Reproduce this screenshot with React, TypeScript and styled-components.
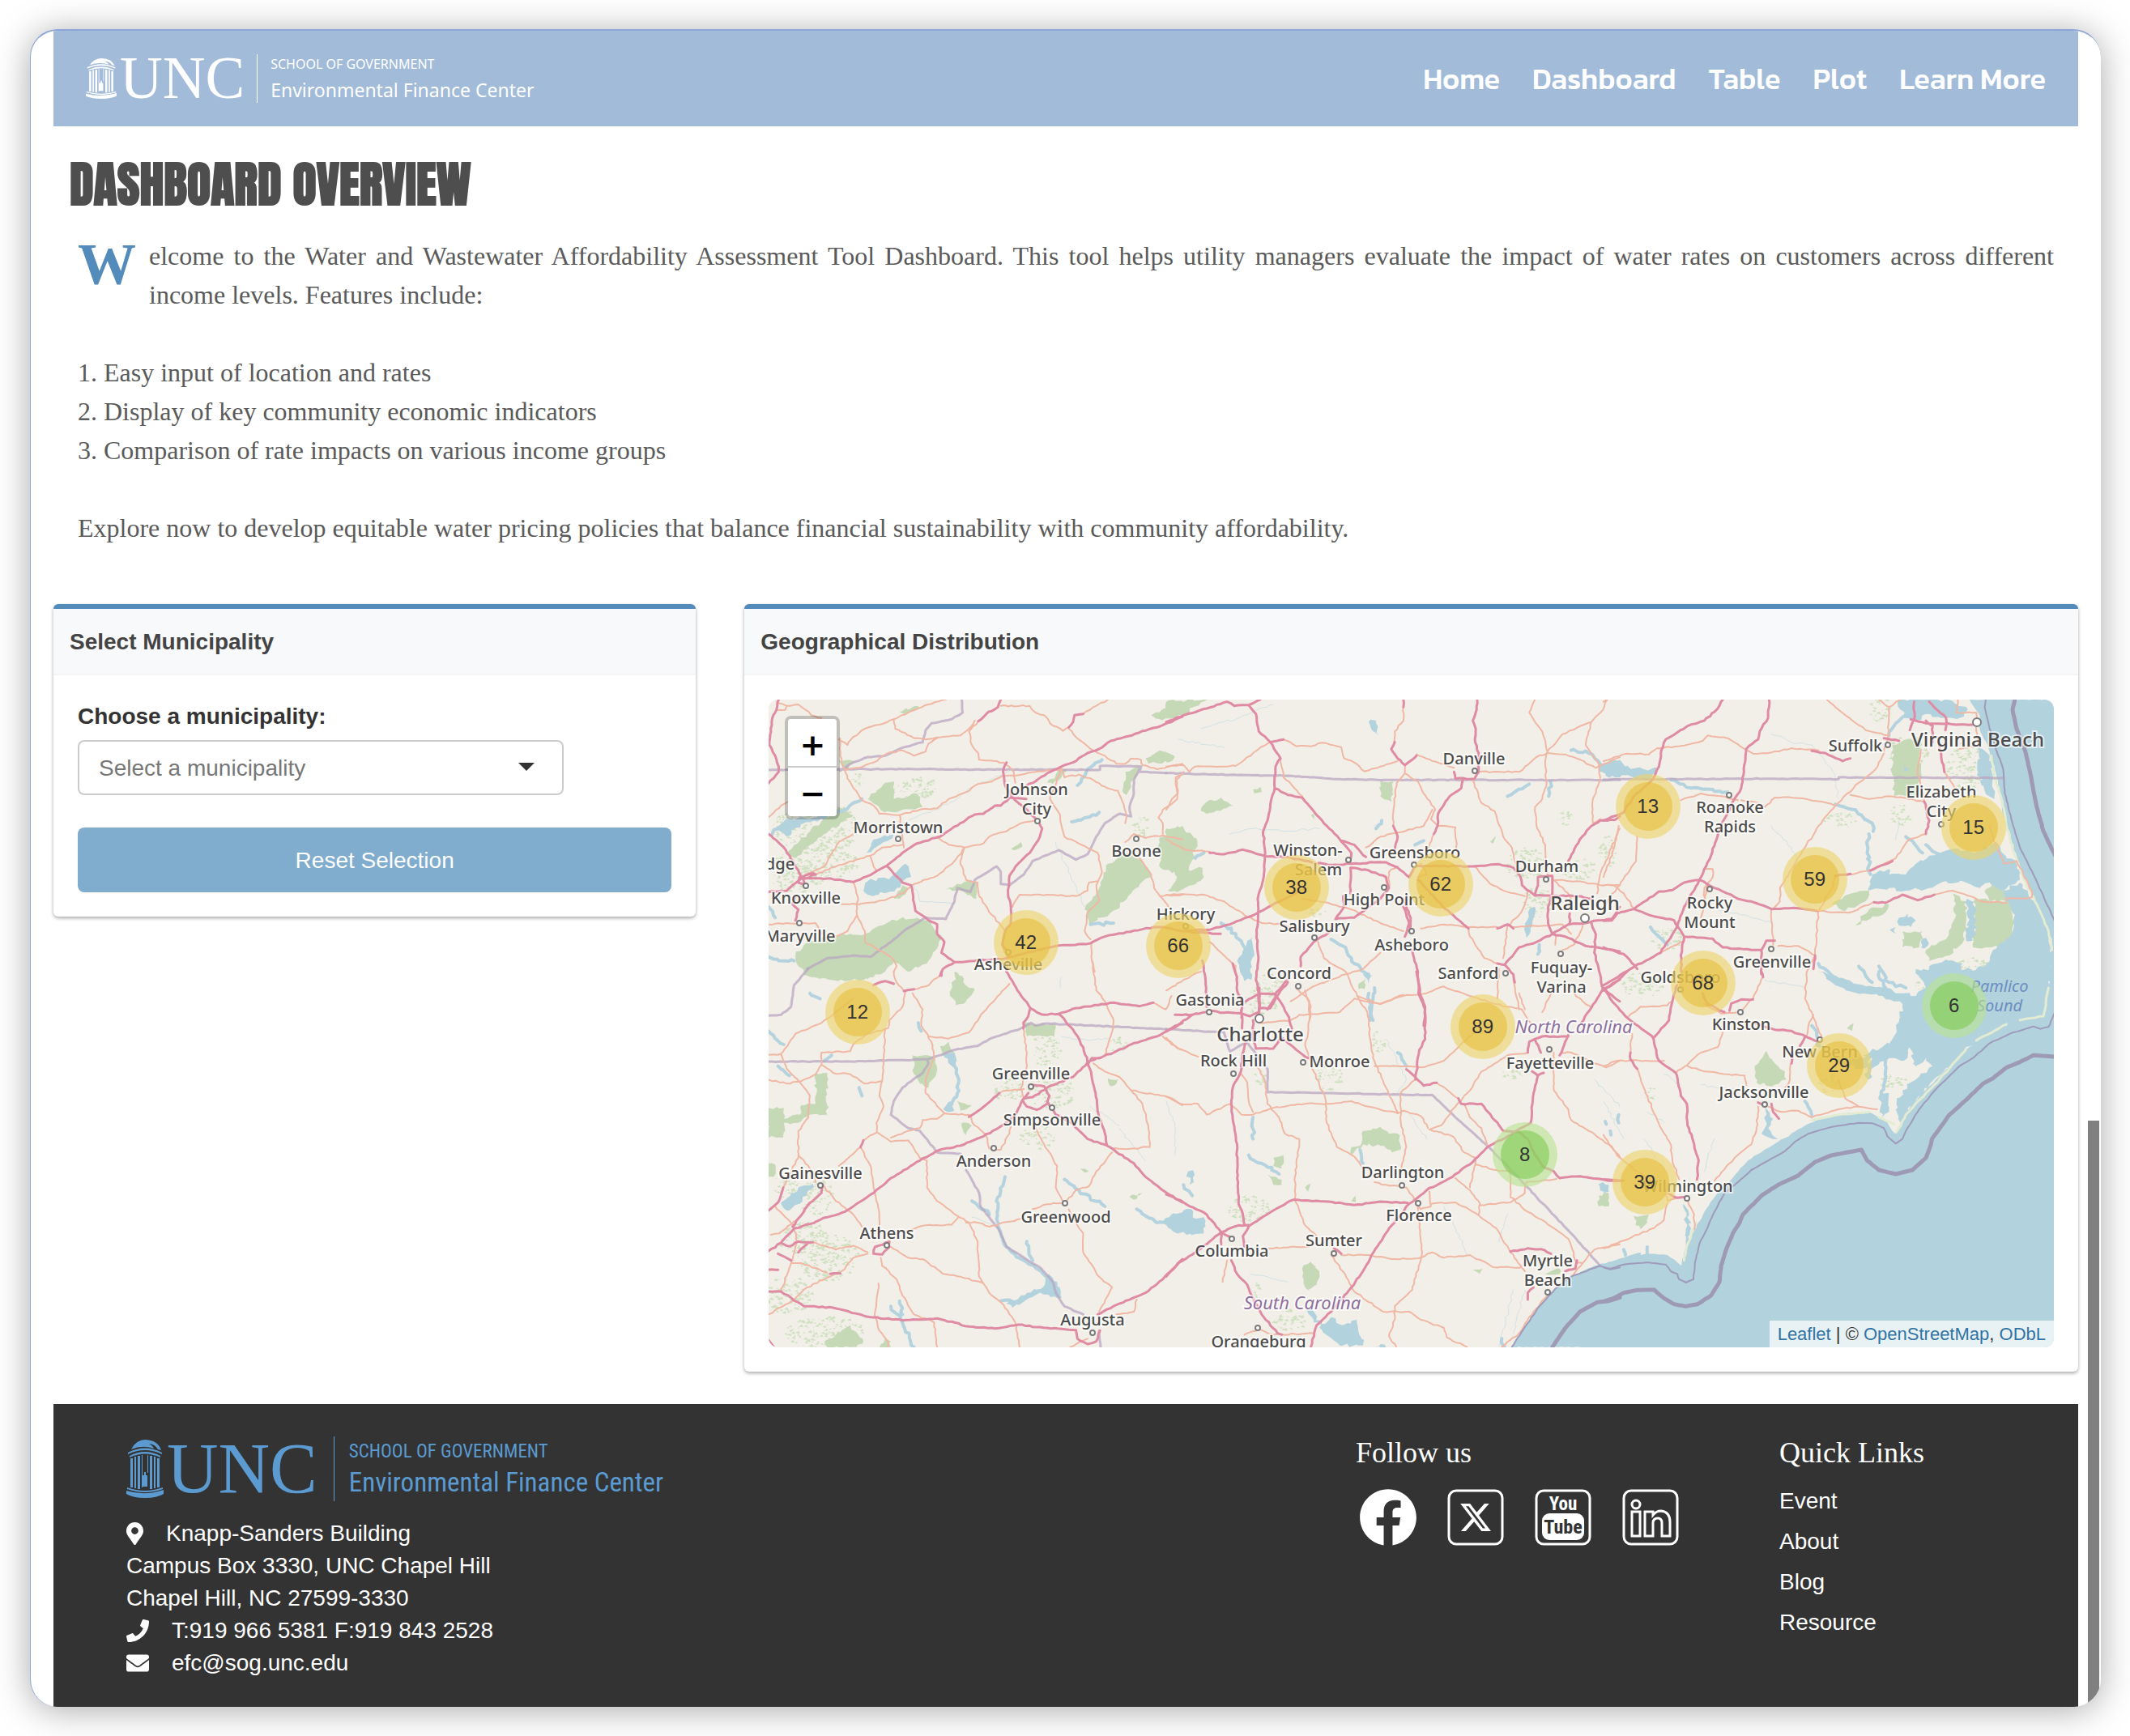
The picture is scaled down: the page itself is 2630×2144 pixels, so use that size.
import React from "react";
import styled, { createGlobalStyle } from "styled-components";
import { FaEnvelope, FaFacebook, FaMapMarkerAlt, FaPhone } from "react-icons/fa";
import { FaXTwitter } from "react-icons/fa6";

const sans = `"Helvetica Neue", "Liberation Sans", Arial, sans-serif`;
const serif = `"Liberation Serif", "Times New Roman", serif`;
const humanist = `"Noto Sans", "Open Sans", sans-serif`;
const condensed = `"Roboto Condensed", "Noto Sans", sans-serif`;
const accent = "#538bba";

const GlobalStyle = createGlobalStyle`
  *, *::before, *::after { box-sizing: border-box; }
  body { margin: 0; background: #fff; font-family: ${sans}; font-size: 28px; line-height: 40px; color: #333; }
  h1, h2, p, ul, ol { margin: 0; padding: 0; }
  ul, ol { list-style: none; }
  a { text-decoration: none; }
  button, select { font: inherit; }
`;

/* ---------- window ---------- */

const Window = styled.div`
  position: relative;
  margin: 36px 36px 36px 37px;
  padding: 0 28px;
  border-top: 2px solid #8da7d8;
  border-left: 1px solid #8da7d8;
  border-radius: 34px;
  background: #fff;
  box-shadow: 0 4px 44px rgba(0, 0, 0, 0.34);
  overflow: hidden;
`;

const ScrollThumb = styled.div`
  position: absolute;
  top: 65%;
  right: 2px;
  bottom: 0;
  width: 14px;
  background: #808080;
`;

/* ---------- logo ---------- */

const LogoLink = styled.a<{ $tone: string }>`
  display: flex;
  align-items: center;
  color: ${(p) => p.$tone};
`;

const Rotunda = styled.svg<{ $w: number; $h: number }>`
  width: ${(p) => p.$w}px;
  height: ${(p) => p.$h}px;
`;

const Monogram = styled.span<{ $size: number }>`
  padding-left: 4px;
  font: ${(p) => p.$size}px/60px ${serif};
`;

const LogoText = styled.span<{ $large?: boolean }>`
  display: flex;
  flex-direction: column;
  justify-content: center;
  gap: ${(p) => (p.$large ? 10 : 4)}px;
  height: ${(p) => (p.$large ? 80 : 60)}px;
  margin-left: ${(p) => (p.$large ? 20 : 15)}px;
  padding-left: ${(p) => (p.$large ? 18 : 16)}px;
  border-left: 1px solid currentColor;
  font-family: ${(p) => (p.$large ? condensed : humanist)};
`;

const School = styled.span<{ $large?: boolean }>`
  font-size: ${(p) => (p.$large ? 23 : 16)}px;
  line-height: 24px;
`;

const Center = styled.span<{ $large?: boolean }>`
  font-size: ${(p) => (p.$large ? 33 : 23)}px;
  line-height: 32px;
`;

function Logo({ tone, large }: { tone: string; large?: boolean }) {
  return (
    <LogoLink href="#home" $tone={tone}>
      <Rotunda $w={large ? 46 : 38} $h={large ? 72 : 50} viewBox="0 0 46 72" preserveAspectRatio="none" aria-hidden="true">
        <g fill="currentColor">
          <path d="M6 12 Q12 0 24 0 Q39 1 43 13 L39 12 Q36 6 28 5 Q33 8 34 11 Q20 6 6 12Z" />
          <path d="M2 16 Q23 5 44 16 L44 18 Q23 8 2 18Z" />
          <path d="M4 20 Q23 10 42 20 L42 22 Q23 13 4 22Z" />
          <path d="M5 23h3v36h-3zM10 21h2v39h-2zM14 20h3v41h-3zM29 20h3v41h-3zM34 21h2v39h-2zM38 23h3v36h-3z" />
          <path d="M20 44h6v14h-6zM22 40h2v4h-2zM19 19h1v40h-1zM26 19h1v22h-1z" />
          <path d="M1 59 Q23 67 45 59 L45 61 Q23 69 1 61Z" />
          <path d="M0 63 Q23 70 46 62 L46 67 Q38 72 23 72 Q8 72 0 67Z" />
        </g>
      </Rotunda>
      <Monogram $size={large ? 88 : 73}>UNC</Monogram>
      <LogoText $large={large}>
        <School $large={large}>SCHOOL OF GOVERNMENT</School>
        <Center $large={large}>Environmental Finance Center</Center>
      </LogoText>
    </LogoLink>
  );
}

/* ---------- header ---------- */

const Header = styled.header`
  display: flex;
  align-items: center;
  justify-content: space-between;
  height: 118px;
  padding: 0 40px;
  background: #a1bbd9;
`;

const Nav = styled.nav`
  display: flex;
  gap: 40px;
`;

const NavLink = styled.a`
  color: #fff;
  font: 500 36px/48px Kanit, ${humanist};
`;

/* ---------- intro ---------- */

const Title = styled.h1`
  padding: 32px 20px 24px;
  color: #4e4e4e;
  font: 700 60px/80px Anton, "Open Sans Condensed", "Roboto Condensed", sans-serif;
  text-transform: uppercase;
`;

const Intro = styled.section`
  padding: 0 30px 70px;
  color: #5a5a5a;
  font: 32px/48px ${serif};
  text-align: justify;
`;

const DropCap = styled.span`
  float: left;
  padding: 4px 16px 0 0;
  color: ${accent};
  font-weight: 700;
  font-size: 72px;
  line-height: 60px;
`;

const FeatureList = styled.ol`
  clear: both;
  padding: 48px 0;
`;

/* ---------- cards ---------- */

const Columns = styled.main`
  display: grid;
  grid-template-columns: calc((100% - 120px) / 3) 1fr;
  gap: 60px;
  align-items: start;
  padding-bottom: 40px;
`;

const Card = styled.section`
  border-top: 6px solid ${accent};
  border-radius: 6px;
  background: #fff;
  box-shadow: 0 2px 4px rgba(0, 0, 0, 0.34);
`;

const CardTitle = styled.h2`
  padding: 21px 20px 19px;
  border-bottom: 2px solid #f4f4f4;
  background: #f8f9fb;
  color: #444;
  font-size: 28px;
  line-height: 40px;
`;

const CardBody = styled.div`
  padding: 30px;
`;

const Label = styled.label`
  display: block;
  padding: 1px 0 9px;
  font-weight: 700;
`;

const SelectBox = styled.div`
  position: relative;
  max-width: 600px;
  margin-bottom: 40px;
`;

const Select = styled.select`
  display: block;
  width: 100%;
  height: 68px;
  padding: 2px 24px 0;
  border: 2px solid #ccc;
  border-radius: 8px;
  appearance: none;
  background: #fff;
  color: #777;
`;

const Caret = styled.svg`
  position: absolute;
  top: 28px;
  right: 36px;
  width: 20px;
  height: 10px;
  pointer-events: none;
`;

const ResetButton = styled.button`
  display: block;
  width: 100%;
  height: 80px;
  padding: 2px 0 0;
  border: 0;
  border-radius: 8px;
  background: #80acce;
  color: #fff;
`;

/* ---------- map ---------- */

const MapFrame = styled.div`
  position: relative;
  height: 800px;
  border-radius: 12px;
  background: #f2efe9;
  overflow: hidden;
`;

const World = styled.div`
  position: absolute;
  top: 0;
  left: calc(50% - 794px);
  width: 1587px;
  height: 800px;
`;

const Drawing = styled.svg`
  display: block;
  width: 100%;
  height: 100%;
`;

const PlaceName = styled.text<{ $kind?: string }>`
  fill: ${(p) => (p.$kind === "state" ? "#8d6f9f" : p.$kind === "water" ? "#6c8dc0" : "#4c4c4c")};
  stroke: rgba(255, 255, 255, 0.65);
  stroke-width: ${(p) => (p.$kind === "water" ? 0 : 4)}px;
  paint-order: stroke;
  font-family: ${humanist};
  font-size: ${(p) => (p.$kind === "city" ? 24 : p.$kind === "state" ? 22 : 20)}px;
  font-style: ${(p) => (p.$kind === "state" || p.$kind === "water" ? "italic" : "normal")};
  font-weight: ${(p) => (p.$kind === "state" || p.$kind === "water" ? 400 : 500)};
  text-anchor: middle;
`;

const Cluster = styled.button<{ $x: number; $y: number; $small: boolean }>`
  position: absolute;
  left: ${(p) => p.$x}px;
  top: ${(p) => p.$y}px;
  width: 80px;
  height: 80px;
  margin: -40px 0 0 -40px;
  padding: 0;
  border: 10px solid transparent;
  border-radius: 50%;
  background: ${(p) => (p.$small ? "rgba(120, 200, 75, 0.55)" : "rgba(230, 190, 60, 0.6)")} padding-box;
  color: #333;
  font-size: 24px;
  line-height: 60px;

  &::before {
    content: "";
    position: absolute;
    inset: -10px;
    z-index: -1;
    border-radius: 50%;
    background: ${(p) => (p.$small ? "rgba(185, 226, 145, 0.62)" : "rgba(238, 212, 105, 0.62)")};
  }
`;

const ClusterLayer = styled.div`
  position: absolute;
  inset: 0;
  z-index: 0;
`;

const ZoomBar = styled.div`
  position: absolute;
  top: 20px;
  left: 20px;
  width: 68px;
  border: 4px solid rgba(0, 0, 0, 0.2);
  border-radius: 8px;
  background: #fff padding-box;
  overflow: hidden;
`;

const ZoomButton = styled.button`
  display: block;
  width: 60px;
  height: 60px;
  padding: 4px 0 0;
  border: 0;
  background: #fff;
  color: #000;
  font: 700 38px/56px "DejaVu Sans", sans-serif;

  &:first-child { border-bottom: 2px solid #ccc; }
`;

const Attribution = styled.div`
  position: absolute;
  right: 0;
  bottom: 0;
  padding: 0 10px;
  background: rgba(255, 255, 255, 0.7);
  font-size: 22px;
  line-height: 33px;

  a { color: #3173a5; }
`;

type Layer = "wood" | "speckle" | "water" | "river" | "creek" | "border" | "trunk" | "motorway" | "limit" | "coastal" | "sand";
type Sheet = { x: number; y: number; sx: number; sy: number } & Partial<Record<Layer, string>>;

/* Survey sheets: each has its own origin and scale; lines are separated by "/" */
const sheets: Sheet[] = [
  {
    x: 900, y: 720, sx: 2.8, sy: 3,
    motorway:
      "172,432 160,480 150,500 145,540 140,600 160,640 172,680 172,700 137,742/1568,495 1530,515 1480,535 1430,548 1380,568 1320,585 1280,615 1240,630 1190,665 1150,680 1100,705 1060,735 1030,750/960,665 948,700 955,750 985,800 1030,840 1066,880/1028,800 970,795 940,825 920,825 880,855 850,858 800,890 730,940 650,965 600,1000 545,1048 500,1075 430,1108 340,1095 250,1095 200,1140 137,1145/137,930 190,980 240,1065 265,1120/265,1120 240,1110 245,1090 290,1075 300,1080 265,1095/545,1048 600,1110 630,1120 645,1215 680,1240 720,1265 720,1300 745,1330 735,1370 780,1405 850,1400 960,1390 1028,1370 1130,1345 1250,1335 1300,1310 1400,1288 1470,1275 1500,1275 1568,1290 1700,1300/1066,880 1083,910 1075,940 1040,1000 1000,1040 970,1085 965,1150 975,1200 975,1260 955,1290 945,1340 965,1370 960,1440/940,432 930,460 890,485 862,512/230,1160 220,1190 240,1210 230,1250/780,1405 740,1430 735,1455/1225,485 1195,490 1190,515 1175,535",
    trunk:
      "172,445 200,455 240,450 265,470 285,490 320,500/165,470 195,470 200,455/380,580 410,600 430,570 470,540 520,525 570,505 620,480 690,450 750,432/570,505 575,540 640,575 680,580 740,570 800,565 830,540 850,510/862,512 830,550 840,600 862,630 865,655 950,665 985,700 990,740/940,455 1040,455 1060,480 1090,490 1110,520 1155,548 1175,535/1225,485 1260,460 1310,432/1175,540 1210,580 1250,615 1300,640 1340,670 1370,670 1390,650 1425,655 1430,675 1480,690 1568,670/384,575 385,640 400,690 450,685 500,665 550,630 600,620 640,640 680,625 690,595 720,575/400,690 410,725 440,770 460,805 500,825 520,855 590,860 660,840 720,835 760,800 820,775 860,745 910,735 945,715/945,715 1010,710 1060,700 1150,690 1160,720 1210,710 1260,730 1300,755 1345,770 1365,820 1375,860 1370,890/590,860 600,940 605,980/137,868 180,825 205,810/720,940 760,970 815,980 880,965 900,940 960,920 1010,890 1060,880/815,980 800,1030 820,1100 860,1110 865,1160 900,1220 935,1260 955,1290/815,980 780,1030 720,1085 640,1115 600,1150 540,1175 480,1185 440,1190 390,1190/490,1015 500,1050 510,1065/265,1080 330,1050 380,960 430,930/300,1080 380,1045 440,1025 490,1010 530,980 600,970/430,1108 445,1160 443,1230 470,1290 470,1330 510,1355 560,1385 580,1420 570,1440/443,1230 410,1290 370,1310/137,1265 200,1260 300,1260 320,1300/1150,685 1110,800 1140,850 1160,940 1230,975 1275,1000 1290,1070 1270,1120 1280,1180 1240,1220 1230,1290 1250,1320/1275,1105 1245,1110 1240,1140 1200,1160 1100,1155 1005,1155 980,1200/1568,710 1545,720 1550,800 1500,840 1485,870 1500,890 1500,930/1370,960 1400,930 1440,945 1500,935 1568,950/1420,1020 1460,1080 1470,1130 1490,1160 1568,1155/1490,1160 1520,1200/1255,1330 1255,1400 1265,1440",
    border:
      "805,432 808,480 770,505 700,520 680,545 670,590 600,610 540,640 480,645 420,670 385,695/137,693 385,690 605,690 1283,692 1283,678 1425,680 1420,700 1512,704/1420,690 1400,730 1400,780 1385,830 1390,865 1350,855 1300,890 1270,940 1240,1005 1200,1025 1175,1010 1140,990 1050,1030 1020,1080 970,1120 940,1115 940,1070 925,1050 850,1100 835,1145 790,1130 780,1180 750,1245 680,1240 610,1285 560,1330 490,1385 430,1380 340,1390 270,1430",
    wood:
      "230,1380 260,1340 340,1310 420,1300 470,1300 520,1270 590,1245 650,1240 700,1255 735,1320 690,1400 620,1440 570,1400 540,1440 460,1470 380,1465 270,1455 240,1420/1310,1040 1380,1000 1430,1030 1460,1080 1380,1160 1340,1210 1290,1240 1250,1265 1230,1210 1280,1130/1500,940 1568,900 1620,960 1568,1140 1520,1020 1470,985/480,800 540,740 570,735 570,800 650,780 670,830 600,840 540,850/1360,770 1370,700 1420,680 1390,750 1375,785/1440,650 1490,620 1540,640 1520,665 1450,670/1460,490 1540,445 1600,440 1590,490 1490,505/750,1135 840,1100 860,1110 855,1170 800,1140/400,690 380,655 440,665/975,985 1010,960 1015,975 985,990/590,480 650,455 660,460 610,490/200,1000 280,920 380,830 430,860 330,930 230,1020/570,1170 600,1120 625,1130 590,1170/1100,740 1150,690 1170,695 1120,745",
    speckle: "300,910 150 100/300,1040 150 60/1420,900 30 40/640,760 80 40/230,1090 90 60/440,730 30 25",
    water: "465,1140 480,1105 560,1090 610,1040 630,1090 580,1130 540,1150 480,1155/475,1000 500,950 570,930 550,955 500,985/165,900 240,870 270,875 200,940",
    river: "150,930 200,880 280,880 400,840 460,800/1290,655 1240,690 1205,750/1185,885 1230,870 1280,850/1250,1265 1330,1260/137,1385 190,1400 225,1400/137,1200 160,1240",
    creek: "600,890 660,860 720,840 800,790 850,750 900,730 980,690/1130,960 1180,1080 1230,1200/640,1120 660,1180 780,1190",
  },
  {
    x: 1440, y: 820, sx: 2.8, sy: 3,
    motorway:
      "0,215 60,190 140,165 210,140 235,155 285,152 310,185 320,250 360,290 395,350 378,380 375,460 360,520 350,580 335,620 342,700 335,800 318,860 318,920 313,1000 318,1100 310,1170 320,1220 320,1310/285,152 325,132/375,460 420,485 470,495 520,560 600,650 640,700 635,740/605,655 650,670 690,715/360,290 405,280/150,700 200,705 265,688 340,712 420,715 480,730 570,745 640,740 720,735 760,735 800,755 840,790/640,755 700,765 760,790 770,830 740,870 650,940 585,945/840,790 860,750 900,748 1050,750 1150,742 1200,755 1225,790 1230,820 1275,858 1320,858/870,800 940,880 1000,940 1045,980/820,132 820,160/790,290 778,315 800,350 825,375 850,355 865,340/1075,132 1070,180 1060,210 1070,240 1068,290 1080,330 1080,400 1066,425 1000,425 995,400/1025,430 1020,460 980,490 940,555 938,600 925,630/785,600 800,640 790,690/100,985 150,985 220,965 320,920 400,875 480,830/145,985 70,990/125,1100 135,1160 140,1270/820,870 845,940 845,990/820,900 840,960 825,1010/850,1060 870,1140 872,1220 895,1280 890,1340/585,945 615,900 612,860/570,990 510,1030 465,1085 465,1120/420,1180 390,1220 360,1275 325,1275/230,1110 245,1160 245,1210 260,1250 260,1310/1568,565 1550,578 1500,580 1470,600 1430,650 1390,730/1335,815 1335,850 1320,900 1320,960 1335,1000 1390,965 1450,960 1490,950 1540,945 1568,900/1335,1000 1280,1030 1220,1050 1170,1115 1145,1110/1335,1000 1390,1015 1450,1045 1490,1050 1568,1065/1470,960 1485,1000 1480,1070 1500,1150 1510,1205/1275,858 1285,820 1285,790 1335,785 1335,815/1320,858 1420,860 1470,870/1170,1115 1200,1150 1205,1180/1145,980 1180,965 1200,980/637,755 637,850/1395,925 1395,960",
    trunk:
      "0,380 60,375 80,400 100,380 240,378 300,330 360,290/405,280 450,305 500,305 540,292 605,308 615,350 650,365 685,398 740,380 800,360/0,540 20,500 40,480 35,430 60,400/395,350 405,420 435,450 470,490/820,160 820,210 790,250 788,290/825,375 825,405 870,435 890,480 930,540 915,575 940,600 1000,605 1003,690/825,405 797,440 785,550 785,600/865,335 920,360 995,385/1080,400 1220,400 1280,345 1320,330 1380,335 1420,350 1485,385 1568,345/1275,132 1255,180 1300,250 1318,325 1310,370 1315,440 1300,500 1275,530 1280,600 1310,670 1318,790/1318,325 1370,260 1470,215 1510,170 1525,132/1470,215 1450,300 1495,370 1500,430 1475,500 1475,590 1500,575/1060,430 1090,515 1135,545 1165,640 1195,680 1215,780/0,650 70,690 150,695/0,855 130,855 200,880 270,930 330,960 400,965 470,990/470,870 560,885 640,910 740,960 820,990/150,1030 200,1080 240,1120 245,1180/0,1210 60,1170 120,1140/925,630 900,690/690,680 740,640 800,625 890,600 920,540/880,980 960,965 1050,975 1145,975/1200,975 1370,965 1400,1000/1250,840 1240,890 1220,930 1180,970 1165,1090/1045,980 1050,1010 1100,1090 1145,1110/1065,750 1120,815 1180,845 1240,860/1335,800 1420,805 1500,820 1568,820/1340,800 1390,850 1400,870/1568,610 1540,680 1500,780 1490,850/525,1030 545,1090 620,1140 660,1230 740,1260 820,1225/740,1070 680,1130 620,1150 520,1190 430,1250/450,1200 495,1250 495,1320/1200,1160 1220,1280/1150,1130 1145,1240/1440,970 1410,1040 1370,1060/1345,1000 1345,1040/1410,1220 1450,1260 1470,1270/770,830 770,770 800,750/880,740 900,780 870,790",
    border: "0,404 180,410 420,414 600,427 780,430 1568,430",
    wood:
      "120,545 135,515 190,495 235,525 200,535 140,555/740,435 785,435 780,510 740,490/0,140 150,132 80,165 0,200/0,610 40,600 55,640 30,660 0,660/-20,640 50,680 60,740 20,775 -20,755/5,840 50,770 125,755 130,790 90,820 40,845/300,465 325,455 330,475 305,480/0,330 30,345 20,360 0,365/665,1185 690,1165 685,1205 665,1205/500,560 510,555 512,575/1120,660 1138,635 1130,665",
    speckle: "1240,740 70 60/1280,880 50 60/350,1190 50 40/1420,760 70 40/1370,570 30 30/1520,700 30 60/520,920 40 20",
    water: "245,1100 270,1050 300,1010 305,1080 290,1130 295,1170 270,1175 255,1140/1500,370 1568,355 1600,400 1568,420 1520,415 1500,400/1255,910 1275,900 1260,990 1245,1015 1240,970/700,215 725,210 735,265 715,250/680,1150 715,1150 700,1185",
    river: "190,960 240,1000 270,1050/1290,1040 1285,1075/570,1020 620,1050 650,1110 700,1150/725,610 745,580/1180,490 1240,455 1255,445/1328,435 1322,490/1400,320 1460,330 1500,370/720,1200 705,1320/100,720 130,700/860,670 890,655",
    creek: "220,630 300,610 400,620 530,610/120,240 250,200 370,150/720,600 745,580/40,280 200,310",
  },
  {
    x: 1980, y: 720, sx: 2.412, sy: 3,
    motorway:
      "355,432 340,465 300,510 250,530 185,580 172,620 165,680 145,730 90,790 60,850 0,880/493,432 490,500 465,550 460,580 425,615 418,700 410,760 385,810 350,900 320,1010 285,1100/620,622 660,630 712,660 735,650/285,1100 240,1110 205,1138 165,1143 90,1208 40,1225 25,1250 0,1252/285,1100 330,1130 380,1155 400,1170 440,1180 500,1208 580,1205 635,1215/90,1208 150,1235 210,1250 240,1310 325,1318 355,1350 440,1360 470,1360 485,1325 510,1325/285,1100 240,1200 220,1270 170,1370 80,1430 0,1490/240,1310 230,1380 232,1440/0,1350 60,1375 100,1430/690,1085 735,1078/795,1065 860,1030/805,1183 840,1185 890,1155 935,1175 985,1155/915,505 960,520 1100,525/925,440 925,505 912,545/970,440 1020,500 1018,545/960,510 980,530 980,590/1000,600 1015,700/835,575 880,585/955,810 970,880 960,930/630,1380 625,1430/470,1360 470,1450",
    trunk:
      "0,660 70,632 135,635 160,612 240,602 295,585 310,565 370,575 420,615 445,632 500,628 560,612 640,620/665,432 720,490 780,545 850,565/850,460 848,560 835,630 810,690 760,740 690,825 640,900 600,980 560,1060 525,1130 525,1180 500,1210 505,1340/820,432 850,460 885,432/735,785 790,800 850,790 910,800 955,810/410,805 460,815 480,830 510,795 580,797 650,810 690,825/230,805 290,780 350,790 400,805/100,940 97,1030 40,1130 0,1200/45,900 25,1010 0,1090/0,1120 30,1120 60,1150 90,1205/960,930 910,950 870,1020 795,1065 740,1080 690,1085 680,1130 640,1215 630,1380 605,1440/640,1215 730,1222 800,1185/985,1155 1040,1140 1130,1180 1200,1185 1200,1170 1275,1165 1275,1140 1230,1030 1195,1040 1170,980 1150,900/945,620 935,700 955,810/1050,770 1015,700/1050,480 1110,480 1110,520 1115,600 1060,615/1050,480 1055,432/300,1060 325,1060 325,1090 300,1130 300,1190/520,1345 580,1345 630,1380/170,1370 240,1325/0,440 10,432/310,1120 290,1240",
    border: "0,728 480,725 560,725 700,727 700,720 1192,722",
    wood:
      "860,600 945,570 945,700 930,790 865,790 860,680/1040,1150 1080,1180 1075,1320 1030,1380 970,1400 960,1360 1020,1320 1050,1230/1105,1170 1220,1180 1220,1300 1190,1350 1100,1350 1105,1250/680,1190 740,1150 790,1140 780,1180 720,1215/750,1270 790,1210 850,1190 830,1230 770,1250/890,1290 950,1290 940,1350 890,1350/1135,1140 1160,1115 1195,1140 1200,1180 1150,1180/910,1120 935,1110 935,1135",
    sand: "1155,640 1165,720 1185,800 1200,900 1225,1010 1260,1120 1290,1190 1325,1290 1335,1360",
    speckle: "820,470 35 45/1070,680 60 90/900,630 60 60/700,880 50 30/880,860 30 40/1100,1420 60 30/180,1320 50 40",
    water:
      "880,432 960,432 1040,438 1085,470 1060,500 1005,500 960,485 930,510 895,500 885,470/790,1140 800,1080 850,1060 850,1080 900,1080 930,1040 970,1010 1040,985 1100,1000 1170,960 1200,1020 1230,1030 1240,1100 1190,1140 1150,1110 1120,1130 1080,1110 1020,1105 970,1130 900,1140 850,1130/1115,600 1150,640 1160,720 1165,800 1135,770 1115,700/880,1240 905,1225 930,1250 915,1275 880,1270/1082,1170 1105,1180 1110,1250 1100,1325 1080,1325 1085,1240/970,1420 1020,1395 1070,1410 1060,1445 1010,1455 970,1450/945,1330 960,1315 965,1345 945,1350/852,1285 870,1275 870,1300/895,675 910,690 895,700/1190,1140 1240,1110 1290,1190 1330,1300 1340,1480 1090,1480 1110,1430 1150,1400 1160,1360 1210,1310 1225,1230/0,665 30,680 100,685 160,690 130,730 60,710 0,705/480,1510 500,1500",
    river: "690,820 750,840 800,890 803,920/790,930 785,1000 795,1080/200,730 260,760 370,775/900,940 950,1000/960,970 1010,1020/850,565 870,520 900,490/640,1410 700,1470 780,1500/820,1420 850,1480 900,1500/140,1275 190,1340",
    creek: "620,600 660,660 690,720 700,800/500,900 560,980 600,1100/500,560 560,590 620,600/880,880 870,950/300,1200 420,1230 500,1260",
    limit: "1225,432 1218,470 1230,540 1255,620 1270,700 1290,830 1310,920 1345,1010",
    coastal: "1138,432 1135,460 1150,540 1165,600 1190,690 1195,780 1220,900 1240,980 1280,1080 1345,1255",
  },
  {
    x: 900, y: 1200, sx: 2.8, sy: 3,
    motorway:
      "500,50 540,35 570,45/605,72 640,65/735,0 730,15/960,0 985,45 1042,135 1035,165 1018,190 1018,210/1042,135 1080,158 1140,157 1200,135 1330,115 1420,128 1467,115/1140,157 1190,215 1225,280 1248,360 1268,450 1280,540 1300,600 1308,645/1568,190 1480,240 1400,265 1330,300 1250,330 1190,390 1100,430 1050,465 1020,470/1240,345 1255,320 1285,320/1050,420 1090,425 1108,460 1100,490 1065,512 1030,500 1015,475 1035,450/990,530 945,570 880,610 800,645 730,660 660,700 560,765 500,820 400,890 340,910 280,935 225,952 180,1005 137,1035/830,538 870,510 935,450/1100,480 1130,530 1190,565 1240,620 1308,645 1400,710 1440,760 1500,810 1568,855/325,790 320,820 270,870 220,945/188,800 170,855 137,885/180,1005 210,1018 240,1000 290,1003/270,1010 240,1040/500,1040 505,1020 555,1000 555,1020 530,1048 500,1045/137,1185 180,1185 260,1240 360,1245 490,1280 600,1292 720,1285 830,1315 920,1322 1000,1308 1100,1320 1200,1328 1205,1360 1240,1380 1270,1370 1283,1330/1275,1270 1350,1230 1440,1190 1500,1140 1568,1065/137,1105 170,1105/350,1120 385,1118/137,1365 155,1391/465,625 455,650/990,530 1015,475/170,1045 215,1070",
    trunk:
      "1018,210 1030,300 1028,360 1010,430 1020,470/935,450 960,440 1020,435/137,308 180,305 230,230 320,190 370,150 430,100/180,305 200,360 245,410 280,460 275,540 240,590 240,690 200,770 188,800/137,400 200,415 245,408 300,380 320,345 320,300 420,295 430,270 480,230 550,210 555,180 600,130 610,75/320,345 360,375 420,380 470,415 530,405 540,215/530,405 520,460 535,500 510,560 512,595 465,625/512,595 560,630 620,625 660,690 685,700 685,800 720,850 790,905 830,930 860,1000 865,1130 900,1190 950,1235 990,1300 1005,1391/570,0 580,40 605,72/640,65 680,55 730,15/635,80 670,140 665,200 700,260 710,320 680,400 680,450 745,525 830,530 850,570 890,605/745,525 720,545 670,550 660,580 620,590 560,615/690,240 760,248 830,225 880,150 970,45/890,610 900,655 940,660 970,600 975,575/455,650 490,720 500,800 520,900 520,990/380,720 455,650/325,790 370,850 430,900 460,945/240,680 290,740 300,780/560,1020 620,1060 670,1065 740,1120 800,1130 880,1155/600,965 680,940 770,938 795,908/820,930 860,930 900,945 1010,915/1050,880 1100,862 1160,857 1130,800 1135,720 1090,640 1060,580/1160,857 1200,810 1245,795 1270,740 1325,670/1325,655 1400,655 1455,650 1450,570 1430,490 1390,440 1350,390 1300,370 1260,340/1390,440 1470,455 1520,465 1568,495/1175,880 1205,940 1225,970 1225,1040 1280,1130 1325,1170 1280,1260/290,1003 370,1030 430,1015 480,1040/525,1060 530,1090 580,1140 600,1200 640,1270 710,1300 720,1391/480,1045 430,1060 390,1110 350,1130 270,1170 220,1220 137,1270/217,1080 250,1080 340,1115/180,1185 215,1080 235,1000 225,945 160,870/145,975 175,970 225,925/517,1155 505,1280 520,1330 550,1370 550,1391/1255,-40 1270,70 1300,110 1330,180 1320,240 1300,310/1467,115 1510,140 1530,90/1410,1215 1400,1260 1340,1270/1500,240 1530,270 1568,290/1180,1391 1240,1360",
    border:
      "275,-10 225,50 215,130 180,160 137,163/137,333 420,333 685,325 690,340 670,375 600,430 570,480 560,530 620,580 660,590 720,670 800,675/820,735 865,820 870,870 930,950 960,1020 1080,1100 1120,1150 1130,1190 1160,1240 1225,1270/685,325 780,290 860,275 900,250 1010,210 1045,190 1060,200 1100,192 1512,213/1280,1330 1285,1391",
    wood:
      "635,310 715,310 720,360 690,430 680,430 640,380/730,275 760,260 780,300 740,315/770,40 800,15 830,60 850,65 820,110 785,125 765,90/275,-10 540,-10 500,20 400,35 290,20/300,375 340,375 340,530 280,530 240,560 190,560 187,615 137,615 137,505 190,505 190,545 245,530 250,495 300,490/1020,190 1130,195 1125,240 1030,240/137,710 160,715 155,760 137,760/790,480 840,495 820,510 800,515/805,560 840,570 820,605/1310,395 1345,400 1335,420 1315,420/1215,730 1245,740 1230,745/330,1370 420,1310 465,1370 440,1391 340,1391/520,1391 540,1360 560,1370 560,1391/1385,835 1430,820 1400,845/780,0 810,15 785,30",
    speckle: "1090,290 50 70/330,1060 110 90/300,840 60 70/200,1200 80 70/1110,450 80 60/1060,610 60 50/330,1340 140 60/250,990 90 60/1340,270 30 30/960,440 60 40/190,800 50 40",
    water: "745,300 780,300 785,350 765,345/180,860 240,800 290,785 285,805 245,860 200,885/1105,1120 1135,1150 1150,1210 1110,1205 1080,1190 1050,1205 980,1245 960,1230 1030,1190 1090,1165/1500,930 1530,900 1600,880 1600,960 1540,965/740,510 770,480 780,515 755,520",
    river: "775,340 795,400 790,450 765,500/930,940 960,1020 1020,1070 1080,1110 1125,1160/955,760 925,850 930,930/840,850 900,900/1160,770 1210,810 1300,870/1410,880 1480,930 1520,935/330,330 355,310/450,430 460,460/170,350 210,385/137,220 190,270/560,1240 600,1300 640,1391/590,1220 600,1270/280,80 315,100/655,190 665,220/1030,1000 1050,1070/940,1220 1000,1220",
    creek: "980,1030 1060,1090/840,910 920,940/1150,240 1250,255 1310,250/1350,580 1440,700/1250,500 1350,570/1150,20 1145,60",
  },
  {
    x: 1440, y: 1200, sx: 2.8, sy: 3,
    motorway:
      "0,222 50,190 90,160 30,160/90,160 150,145 200,152 260,155 290,165 320,150/262,100 262,210/322,60 322,160/275,110 322,82 375,82 400,120 425,170 435,220/375,85 420,30/350,140 380,90/300,180 300,250 310,285 370,285 400,245 450,290 490,320/275,260 262,320 258,370 230,430 225,490 232,560 245,640 245,740 250,860 265,900 270,940/865,0 880,90 895,130 895,250 875,290 865,370 862,400/830,362 860,390 890,422 935,412/1010,470 1020,490 1090,490 1165,590 1220,595 1250,620 1275,680 1300,720 1340,740 1360,765 1430,758 1540,775 1568,775/1305,375 1285,385 1270,450 1260,560 1180,610 1110,650 1060,705 990,760 900,810 830,870 820,890 780,940 710,1050 680,1110 640,1170 570,1260 520,1310 500,1391/0,825 60,855 140,900 190,965 225,985/190,965 150,1000 100,1040 40,1080 0,1130/190,965 250,940 290,940 370,885 440,845 560,852 650,865 740,852 835,857/285,945 265,980 270,1020/225,1070 245,1120 280,1160 295,1200 330,1270 385,1340 400,1345/1190,1037 1250,1025 1295,1028 1330,1045/1270,1170 1250,1190 1250,1215/1420,1070 1415,1100 1380,1110/1250,300 1255,260 1300,240 1390,240/1390,235 1360,310/1435,190 1510,65 1568,30/1275,250 1295,300/1265,370 1285,385/1510,65 1568,110/580,1025 605,1045/190,965 190,1010",
    trunk:
      "0,245 40,285 110,315/0,463 50,490 110,490 140,530 220,490 260,530 300,530 370,505 480,490 555,490 640,480 700,500 800,525 820,515 880,535 905,580/255,375 280,410 285,480 300,520/310,340 340,400 350,490 390,540 410,600 460,620 445,760 445,840 480,940 520,980/505,360 550,470 555,560 590,650 650,685 680,730/660,90 695,150 700,200 715,320 760,430 800,520/860,400 810,450 812,515 810,550 830,650 820,700 805,770/720,350 800,350 880,355 960,330 1000,290 1060,230/460,160 600,150 650,100 740,120 820,90 900,80 960,55 1050,90 1140,120 1230,140 1260,190/480,70 500,130 490,230 480,270 505,360/325,190 430,180 460,160/935,412 1010,470/910,585 950,570 1000,500 1050,440 1090,370 1180,310 1250,300/910,585 990,610 1030,670 1070,690/1030,490 1050,540 1090,580 1110,650/1070,715 1140,735 1190,740 1190,830/1070,700 1050,800/1000,765 1050,810 1085,860 1080,900/910,815 915,870 880,880 860,850/720,780 760,790 830,800 865,850/915,860 1000,855 1070,895 1140,950 1190,1040 1240,1110/1085,865 1190,855 1240,820 1245,780 1350,768/1190,835 1250,890 1300,920 1390,990 1420,1080 1440,1080 1400,1130/355,1025 420,1022 495,1020/605,1050 700,1050 780,1065 880,1060 920,1040 960,1060 1050,1050 1130,1095 1230,1095/570,1050 610,1110 650,1185 750,1260 840,1260 880,1290 960,1320 970,1355 1040,1391/870,870 885,1040 850,1180 790,1240 790,1290 770,1350 795,1391/195,1150 210,1070/270,1345 320,1325 370,1345 510,1340/1320,1195 1270,1260 1220,1340 1160,1391/1340,300 1340,440 1390,510 1400,550 1460,590 1530,640 1568,685/1365,300 1400,300 1480,340 1520,355 1568,330/1440,1080 1480,1030 1568,1010/1300,150 1340,60/1220,80 1240,140",
    border: "0,213 200,225 220,295 280,262 350,360 350,447 560,450 800,455 920,457 1000,540 1120,655 1240,790 1400,970 1500,1090",
    wood:
      "680,590 740,575 770,600 800,600 810,660 780,670 740,645 680,640 640,680 640,650 670,645/370,690 405,680 400,730 370,720/350,750 400,770 400,790 370,790/470,1100 500,1075 530,1110 520,1160 490,1180 475,1140/1290,1120 1360,1100 1360,1120/1495,830 1530,820 1530,870 1495,870/1060,1105 1095,1100 1085,1120/480,800 500,785 490,815/640,850 655,830 655,855",
    speckle: "560,390 45 50/730,260 25 40/320,110 60 50/280,880 70 50/420,1290 60 40/1200,380 50 20/320,390 20 30/310,1180 20 30",
    water: "0,910 60,915 130,910 130,970 70,975 20,960/530,1320 570,1280 610,1310 660,1290 680,1385 600,1385 560,1350/480,1240 510,1260 540,1310 510,1300/75,740 95,740 95,780 80,790/1493,790 1510,780 1532,795 1525,815 1500,810/720,1391 740,1380 760,1391",
    river: "300,540 300,620/285,680 330,710 390,750/60,790 90,830/700,80 715,180/800,300 830,350/670,660 680,710/1160,1360 1170,1391",
    creek: "0,480 30,560 30,680/760,250 830,400 800,450/840,530 900,620/960,870 1000,950 1040,1050/1180,900 1150,1000/1200,1180 1150,1391/1240,1180 1200,1340/290,1120 420,1150/1480,400 1568,500",
    limit: "1335,1391 1380,1320 1430,1260 1490,1225 1530,1220 1568,1207",
    coastal: "1195,1391 1235,1325 1290,1240 1345,1175 1400,1130 1500,1090 1535,1103 1568,1096",
  },
  {
    x: 1980, y: 1200, sx: 2.412, sy: 3,
    motorway:
      "0,70 30,45 70,0/0,60 20,100 65,165 145,240 165,330 215,375 230,460 248,490 250,570 270,640 283,700 278,770/0,770 60,775/190,820 220,838 245,835/205,110 195,180 150,245/375,145 380,118 410,103 445,103/450,190 510,215 560,220 640,260/600,240 585,275/562,300 560,340/80,300 80,325 100,360/500,490 505,520 522,545/460,485 480,500/232,0 215,60 205,110/470,0 475,20/295,80 310,120 360,150",
    trunk:
      "0,350 40,330 75,330 180,330/100,360 120,430 160,550 200,640 205,700 225,770/75,165 110,130 190,125 205,110/85,230 80,300/215,375 250,345 290,300 340,280 355,225/250,350 300,370 370,380 420,385 425,420/558,340 555,400 540,430/475,20 445,100 415,140/605,0 600,100 620,150 650,250/625,160 610,200 605,240/700,400 720,470 760,500 815,510/490,500 530,520 580,515 620,540 700,510 760,500/460,500 455,590 440,640 390,690 330,775/0,605 40,680 100,740 180,800 190,850 220,838/190,860 180,920 150,950 50,1000 0,1025/245,840 270,900 270,955/300,120 350,155 400,150",
    wood: "450,350 485,295 510,340 540,370 545,400 500,425 455,410/90,905 135,900 130,930 110,955 95,940/0,820 15,820 15,870 0,870/725,210 745,190 740,220/960,30 1000,10 1020,70 990,60",
    sand: "240,1070 250,1010 275,930/620,550 700,530 790,520/820,540 865,565/872,595 900,530 1000,400 1080,285/1110,255 1200,195/1240,180 1310,165 1325,60",
    speckle: "110,50 60 50/660,410 30 40/130,450 20 30/960,50 40 30/860,410 40 30",
    water:
      "1335,-10 1315,155 1230,190 1120,250 1060,310 1000,385 930,475 885,560 870,510 890,440 930,400 980,350 960,320 930,350 910,280 895,330 850,320 810,350 790,400 775,380 800,320 770,310 830,280 865,240 880,180 890,130 870,80 930,90 960,60 930,-10/640,0 690,20 760,55 840,60 900,90 880,110 820,90 740,75 690,50/740,320 800,310 790,350 750,360/480,500 505,545 490,580 520,620 470,600 485,560/238,860 255,900 258,960 240,1070 245,960/0,790 15,790 15,815 0,820/820,460 850,450 850,520 830,540/640,240 655,290 690,300 740,330 730,350 680,320 630,270",
    river: "620,200 645,260/600,480 620,530/60,1030 65,1050/130,1020 130,1045/820,0 840,60/760,-20 800,40/1060,-20 1050,20/840,330 830,470/900,450 930,490/45,530 45,560/5,555 8,565/20,590 22,605",
    creek: "180,380 230,420/290,420 400,440/120,620 160,700/330,620 300,740/0,480 60,620/130,520 180,560/480,30 600,60",
    limit:
      "0,1222 30,1210 60,1190 100,1180 150,1178 180,1210 210,1232 245,1240 280,1232 320,1200 345,1150 350,1090 365,1030 385,970 405,930 415,900 470,830 520,790 580,755 630,705 680,680 768,660 785,700 820,735 870,750 920,735 960,690 975,640 978,620 1030,530 1080,475 1130,415 1160,395 1200,355 1240,335 1280,310 1345,315",
    coastal:
      "0,1095 20,1100 60,1085 130,1077 185,1085 200,1110 220,1120 225,1140 245,1152 268,1140 272,1080 285,1010 305,960 330,890 360,820 400,780 440,735 490,700 540,665 570,630 610,600 680,575 760,560 800,562 835,580 845,610 870,637 890,620 905,580 940,510 990,435 1060,350 1100,320 1150,265 1210,230 1280,203 1300,212 1325,205 1345,150",
  },
];

/* Atlantic Ocean, on the scale of the last sheet */
const ocean =
  "-65,1391 -20,1300 0,1265 -60,1220 0,1085 60,1060 130,1045 190,1050 232,1090 240,1040 260,980 270,960 300,890 340,820 380,770 430,700 520,630 600,570 650,545 720,525 790,520 840,550 868,600 885,560 920,490 990,400 1060,310 1130,240 1200,195 1290,165 1315,150 1322,100 1330,0 1335,-120 1300,-210 1280,-280 1240,-390 1210,-500 1190,-580 1178,-680 1165,-760 1145,-830 1120,-900 1120,-950 1090,-1008 1345,-1008 1345,1400 -130,1400";

const oceanSouth = "1195,1391 1235,1325 1290,1240 1340,1180 1400,1130 1480,1090 1568,1065 1640,1040 1640,1391";

function random(seed: number) {
  let s = seed;
  return () => {
    s = (s * 1664525 + 1013904223) % 4294967296;
    return s / 4294967296;
  };
}

/* Breaks straight segments into short uneven ones */
function uneven(points: string, amount: number, closed = false) {
  const p = points.trim().split(" ").map((c) => c.split(",").map(Number));
  if (closed) p.push(p[0]);
  const next = random(p[0][0] * 31 + p[0][1] * 17 + p.length + 5000);
  let d = `M${p[0][0]} ${p[0][1]}`;
  for (let i = 1; i < p.length; i++) {
    const [ax, ay] = p[i - 1];
    const [bx, by] = p[i];
    const steps = Math.max(1, Math.round(Math.hypot(bx - ax, by - ay) / 13));
    for (let k = 1; k <= steps; k++) {
      const t = k / steps;
      const off = k === steps ? 0 : amount;
      const x = ax + (bx - ax) * t + (next() - 0.5) * off;
      const y = ay + (by - ay) * t + (next() - 0.5) * off;
      d += `L${x.toFixed(1)} ${y.toFixed(1)}`;
    }
  }
  return closed ? d + "Z" : d;
}

function speckles(spec: string) {
  return spec.split("/").map((s) => {
    const [c, rx, ry] = s.split(" ");
    const [cx, cy] = c.split(",").map(Number);
    const next = random(cx * 13 + cy * 7 + 900);
    const count = Math.round((Number(rx) * Number(ry)) / 45);
    let d = "";
    for (let i = 0; i < count; i++) {
      const a = next() * Math.PI * 2;
      const r = Math.sqrt(next());
      const x = cx + Math.cos(a) * r * Number(rx);
      const y = cy + Math.sin(a) * r * Number(ry);
      const w = 3 + next() * 9;
      d += `M${x.toFixed(1)} ${y.toFixed(1)}l${w.toFixed(1)} ${(-w * 0.6).toFixed(1)}l${(w * 0.3).toFixed(1)} ${(w * 0.9).toFixed(1)}z`;
    }
    return d;
  }).join("");
}

const lineStyle: Partial<Record<Layer, { stroke: string; width: number; rough: number; opacity?: number }>> = {
  creek: { stroke: "#d3e2e4", width: 1, rough: 9 },
  river: { stroke: "#b4d3df", width: 4, rough: 12 },
  sand: { stroke: "#e3ebd2", width: 3, rough: 4 },
  border: { stroke: "#b8a5c0", width: 3, rough: 3, opacity: 0.75 },
  trunk: { stroke: "#f0b8a4", width: 2, rough: 5 },
  motorway: { stroke: "#df8ba4", width: 3, rough: 4 },
  coastal: { stroke: "#9f9bbb", width: 2, rough: 2 },
  limit: { stroke: "#9e99b5", width: 5, rough: 1 },
};

const place = (s: Sheet) => `translate(${s.x} ${s.y}) scale(${1 / s.sx} ${1 / s.sy})`;

function Areas({ layer, fill, rough }: { layer: Layer; fill: string; rough: number }) {
  return (
    <>
      {sheets.map((s, i) => (
        <path key={i} transform={place(s)} fill={fill} d={(s[layer] ?? "0,0").split("/").map((l) => uneven(l, rough, true)).join("")} />
      ))}
    </>
  );
}

function Lines({ layer }: { layer: Layer }) {
  const look = lineStyle[layer]!;
  return (
    <>
      {sheets.filter((s) => s[layer]).map((s, i) => (
        <path
          key={i}
          transform={place(s)}
          fill="none"
          stroke={look.stroke}
          strokeWidth={look.width}
          strokeOpacity={look.opacity ?? 1}
          strokeLinejoin="round"
          strokeLinecap="round"
          vectorEffect="non-scaling-stroke"
          d={s[layer]!.split("/").map((l) => uneven(l, look.rough)).join("")}
        />
      ))}
    </>
  );
}

type Place = [name: string, x: number, y: number, kind?: string];
const places: Place[] = [
  ["Danville", 1820, 944], ["Johnson", 1280, 982], ["City", 1280, 1006], ["Morristown", 1109, 1029], ["Boone", 1403, 1058],
  ["dge", 963, 1074], ["Knoxville", 995, 1116], ["Maryville", 988, 1163], ["Asheville", 1245, 1198], ["Hickory", 1464, 1136],
  ["Winston-", 1615, 1057], ["Salem", 1628, 1081], ["Greensboro", 1747, 1060], ["High Point", 1709, 1118], ["Durham", 1910, 1077],
  ["Raleigh", 1957, 1124, "city"], ["Salisbury", 1623, 1151], ["Asheboro", 1743, 1174], ["Concord", 1604, 1209],
  ["Sanford", 1813, 1209], ["Fuquay-", 1928, 1202], ["Varina", 1928, 1226], ["Gastonia", 1494, 1242], ["Suffolk", 2291, 928],
  ["Virginia Beach", 2442, 922, "city"], ["Elizabeth", 2397, 985], ["City", 2397, 1009], ["Roanoke", 2136, 1004],
  ["Rapids", 2136, 1028], ["Rocky", 2111, 1122], ["Mount", 2111, 1146], ["Greenville", 2188, 1195], ["Goldsboro", 2075, 1214],
  ["Kinston", 2150, 1272], ["New Bern", 2247, 1306], ["Jacksonville", 2178, 1356], ["Wilmington", 2084, 1472],
  ["Pamlico", 2469, 1225, "water"], ["Sound", 2469, 1249, "water"], ["North Carolina", 1943, 1276, "state"],
  ["South Carolina", 1608, 1617, "state"], ["Greenville", 1273, 1333], ["Simpsonville", 1299, 1390], ["Anderson", 1227, 1441],
  ["Gainesville", 1013, 1456], ["Athens", 1095, 1530], ["Greenwood", 1316, 1510], ["Augusta", 1349, 1637],
  ["Charlotte", 1556, 1286, "city"], ["Rock Hill", 1523, 1317], ["Monroe", 1654, 1318], ["Fayetteville", 1914, 1320],
  ["Darlington", 1732, 1455], ["Florence", 1752, 1508], ["Sumter", 1647, 1539], ["Columbia", 1521, 1552], ["Myrtle", 1911, 1564],
  ["Beach", 1911, 1588], ["Orangeburg", 1554, 1664],
];

const towns =
  "1281,1014 1109,1036 1403,1036 995,1094 987,1140 1245,1176 1821,952 1665,1062 1746,1068 1709,1096 1909,1086 1623,1158 1743,1150 1603,1218 1859,1202 1927,1178 1493,1250 1464,1144 2331,920 2397,1018 2135,982 2111,1098 2187,1172 2075,1222 2149,1250 2247,1284 2179,1364 2083,1480 1273,1342 1299,1368 1227,1418 1013,1464 1095,1538 1315,1486 1349,1646 1523,1326 1609,1312 1913,1296 1731,1464 1751,1486 1647,1548 1521,1530 1911,1596 1553,1640"
    .split(" ")
    .map((t) => t.split(",").map(Number));
const cities = [[1957, 1134], [1555, 1258], [2441, 892]];

const clusters: [count: number, x: number, y: number][] = [
  [42, 1267, 1164], [66, 1455, 1168], [12, 1059, 1250], [38, 1601, 1096], [62, 1779, 1092], [13, 2035, 996], [15, 2437, 1022],
  [59, 2241, 1086], [68, 2103, 1214], [89, 1831, 1268], [6, 2413, 1242], [29, 2271, 1316], [8, 1883, 1426], [39, 2031, 1460],
];

function CarolinaMap() {
  return (
    <MapFrame>
      <World>
        <Drawing viewBox="949 864 1587 800" role="img" aria-label="Map of North and South Carolina">
          <rect x="949" y="864" width="1587" height="800" fill="#f2efe9" />
          {sheets.map((s, i) => (
            <path key={i} transform={place(s)} fill="#cfe0c0" d={speckles(s.speckle ?? "0,0 0 0")} />
          ))}
          <Areas layer="wood" fill="#c5d9b7" rough={12} />
          <Lines layer="creek" />
          <Lines layer="river" />
          <path transform={place(sheets[5])} fill="#b2d2dd" d={uneven(ocean, 4, true)} />
          <path transform={place(sheets[4])} fill="#b2d2dd" d={uneven(oceanSouth, 4, true)} />
          <Areas layer="water" fill="#b2d2dd" rough={14} />
          <Lines layer="sand" />
          <Lines layer="border" />
          <Lines layer="trunk" />
          <Lines layer="motorway" />
          <Lines layer="coastal" />
          <Lines layer="limit" />
          <g fill="#fff" stroke="#7b7b7b" strokeWidth="2">
            {towns.map(([x, y]) => <circle key={`${x}-${y}`} cx={x} cy={y} r="3" />)}
            {cities.map(([x, y]) => <circle key={`${x}-${y}`} cx={x} cy={y} r="5" />)}
          </g>
          {places.map(([name, x, y, kind]) => (
            <PlaceName key={`${name}-${x}`} x={x} y={y} $kind={kind}>{name}</PlaceName>
          ))}
        </Drawing>
        <ClusterLayer>
          {clusters.map(([count, x, y]) => (
            <Cluster key={count} type="button" $x={x - 949} $y={y - 864} $small={count < 10}>{count}</Cluster>
          ))}
        </ClusterLayer>
      </World>
      <ZoomBar>
        <ZoomButton type="button" aria-label="Zoom in">+</ZoomButton>
        <ZoomButton type="button" aria-label="Zoom out">−</ZoomButton>
      </ZoomBar>
      <Attribution>
        <a href="#leaflet">Leaflet</a> | © <a href="#osm">OpenStreetMap</a>, <a href="#odbl">ODbL</a>
      </Attribution>
    </MapFrame>
  );
}

/* ---------- footer ---------- */

const Footer = styled.footer`
  display: grid;
  grid-template-columns: 1fr 523px 279px;
  padding: 40px 90px 34px;
  background: #333;
  color: #fff;
`;

const Address = styled.ul`
  padding-top: 20px;
`;

const AddressLine = styled.li`
  display: flex;
  align-items: center;
  gap: 28px;
`;

const Pin = styled(FaMapMarkerAlt)`
  width: 21px;
  height: 28px;
`;

const FooterTitle = styled.h2`
  font: 400 36px/40px ${serif};
`;

const Socials = styled.div`
  display: flex;
  gap: 36px;
  padding: 24px 4px;
`;

const SocialLink = styled.a`
  display: flex;
  align-items: center;
  justify-content: center;
  width: 72px;
  height: 72px;
  color: #fff;
`;

const BoxedLogo = styled.svg`
  width: 72px;
  height: 72px;
`;

const QuickLinks = styled.ul`
  padding-top: 15px;
  line-height: 50px;

  a { color: #fff; }
`;

export default function App() {
  return (
    <>
      <GlobalStyle />
      <Window>
        <Header>
          <Logo tone="#fff" />
          <Nav>
            {["Home", "Dashboard", "Table", "Plot", "Learn More"].map((item) => (
              <NavLink key={item} href="#nav">{item}</NavLink>
            ))}
          </Nav>
        </Header>

        <Title>Dashboard Overview</Title>
        <Intro>
          <p>
            <DropCap>W</DropCap>elcome to the Water and Wastewater Affordability Assessment Tool Dashboard. This tool helps
            utility managers evaluate the impact of water rates on customers across different income levels. Features include:
          </p>
          <FeatureList>
            <li>1. Easy input of location and rates</li>
            <li>2. Display of key community economic indicators</li>
            <li>3. Comparison of rate impacts on various income groups</li>
          </FeatureList>
          <p>
            Explore now to develop equitable water pricing policies that balance financial sustainability with community
            affordability.
          </p>
        </Intro>

        <Columns>
          <Card>
            <CardTitle>Select Municipality</CardTitle>
            <CardBody>
              <Label htmlFor="municipality">Choose a municipality:</Label>
              <SelectBox>
                <Select id="municipality" defaultValue="">
                  <option value="">Select a municipality</option>
                </Select>
                <Caret viewBox="0 0 20 10" aria-hidden="true"><path d="M0 0h20L10 10z" fill="#333" /></Caret>
              </SelectBox>
              <ResetButton type="button">Reset Selection</ResetButton>
            </CardBody>
          </Card>
          <Card>
            <CardTitle>Geographical Distribution</CardTitle>
            <CardBody>
              <CarolinaMap />
            </CardBody>
          </Card>
        </Columns>

        <Footer>
          <div>
            <Logo tone="#5b9bd1" large />
            <Address>
              <AddressLine><Pin />Knapp-Sanders Building</AddressLine>
              <AddressLine>Campus Box 3330, UNC Chapel Hill</AddressLine>
              <AddressLine>Chapel Hill, NC 27599-3330</AddressLine>
              <AddressLine><FaPhone size={28} />T:919 966 5381 F:919 843 2528</AddressLine>
              <AddressLine><FaEnvelope size={28} />efc@sog.unc.edu</AddressLine>
            </Address>
          </div>
          <div>
            <FooterTitle>Follow us</FooterTitle>
            <Socials>
              <SocialLink href="#facebook" aria-label="Facebook"><FaFacebook size={72} /></SocialLink>
              <SocialLink href="#x" aria-label="X">
                <BoxedLogo viewBox="0 0 72 72">
                  <rect x="3" y="3" width="66" height="66" rx="9" fill="none" stroke="#fff" strokeWidth="3" />
                  <FaXTwitter x="15" y="15" size={42} color="#fff" />
                </BoxedLogo>
              </SocialLink>
              <SocialLink href="#youtube" aria-label="YouTube">
                <BoxedLogo viewBox="0 0 72 72" fontFamily="'Roboto Condensed', 'Liberation Sans', sans-serif" fontWeight="700" textAnchor="middle">
                  <rect x="3" y="3" width="66" height="66" rx="9" fill="none" stroke="#fff" strokeWidth="3" />
                  <text x="36" y="27" fontSize="23" fill="#fff">You</text>
                  <rect x="10" y="31" width="52" height="33" rx="9" fill="#fff" />
                  <text x="36" y="56" fontSize="24" fill="#333">Tube</text>
                </BoxedLogo>
              </SocialLink>
              <SocialLink href="#linkedin" aria-label="LinkedIn">
                <BoxedLogo viewBox="0 0 72 72">
                  <rect x="3" y="3" width="66" height="66" rx="9" fill="none" stroke="#fff" strokeWidth="3" />
                  <g fill="none" stroke="#fff" strokeWidth="3">
                    <circle cx="18" cy="20" r="5" />
                    <rect x="13" y="29" width="10" height="30" />
                    <path d="M29 29h10v4q4-5 10-5q11 1 11 14v17h-10v-16q0-6-5-6q-6 0-6 6v16h-10z" />
                  </g>
                </BoxedLogo>
              </SocialLink>
            </Socials>
          </div>
          <div>
            <FooterTitle>Quick Links</FooterTitle>
            <QuickLinks>
              {["Event", "About", "Blog", "Resource"].map((item) => (
                <li key={item}><a href="#link">{item}</a></li>
              ))}
            </QuickLinks>
          </div>
        </Footer>
        <ScrollThumb />
      </Window>
    </>
  );
}
